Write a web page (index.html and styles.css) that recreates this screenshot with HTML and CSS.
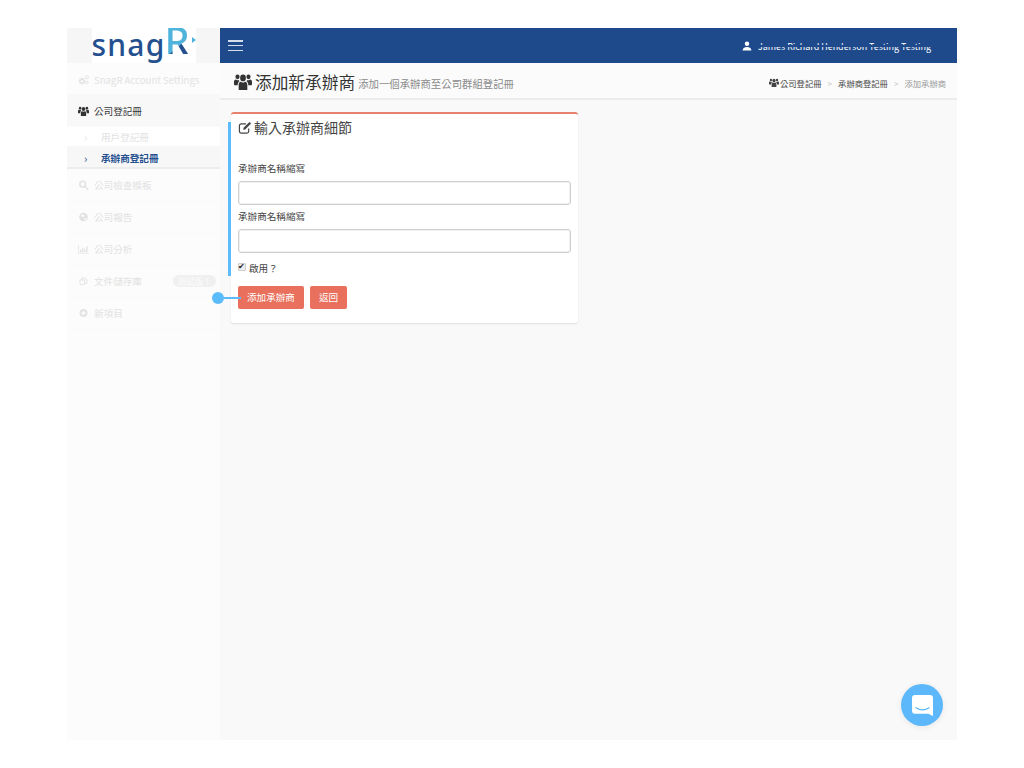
FILE: index.html
```html
<!DOCTYPE html>
<html>
<head>
    <title>添加新承辦商</title>
    <meta charset="UTF-8">
    <meta name="viewport" content="width=device-width, initial-scale=1.0">
    <link rel="stylesheet" href="styles.css">
</head>
<body>
  <svg class="icon-defs" width="0" height="0">
    <defs>
      <symbol id="i-users" viewBox="0 0 20 16" preserveAspectRatio="none">
        <circle cx="10" cy="4.600" r="3.200"/>
        <circle cx="3.900" cy="3.600" r="2.300"/>
        <circle cx="16.100" cy="3.600" r="2.300"/>
        <path d="M5.200 15.500v-4.300c0-2 1.300-3 2.600-3 .7.500 1.400.8 2.200.8s1.500-.3 2.200-.8c1.300 0 2.600 1 2.600 3v4.300c0 .3-.3.5-.6.500H5.800c-.3 0-.6-.2-.6-.5z"/>
        <path d="M0 10.500V8.300c0-1.300.8-2.200 2-2.200.6.500 1.200.7 1.900.7.500 0 .9-.1 1.300-.3.200.5.500.9.900 1.200-1.200.6-2 1.800-2 3.500v.4H.9c-.5 0-.9-.3-.9-.9z"/>
        <path d="M20 10.500V8.300c0-1.300-.8-2.200-2-2.200-.6.500-1.200.7-1.900.7-.5 0-.9-.1-1.300-.3-.2.500-.5.900-.9 1.200 1.200.6 2 1.800 2 3.500v.4h3.200c.5 0 .9-.3.900-.9z"/>
      </symbol>
      <symbol id="i-cogs" viewBox="0 0 16 14">
        <path d="M5.500 3.200l1 .1.400 1.300.9.400 1.200-.6.900.9-.6 1.200.4.900 1.300.4v1.400l-1.300.4-.4.900.6 1.200-.9.900-1.200-.6-.9.400-.4 1.300H5.100l-.4-1.300-.9-.4-1.200.6-.9-.9.6-1.200-.4-.9L.5 9.500V8.100l1.300-.4.400-.9-.6-1.200.9-.9 1.200.6.900-.4.400-1.300zM5.800 7a1.800 1.800 0 1 0 0 3.600 1.800 1.800 0 0 0 0-3.600z" fill-rule="evenodd"/>
        <circle cx="13" cy="3" r="2.200" fill="none" stroke="currentColor" stroke-width="1.400"/>
        <circle cx="13" cy="10.800" r="1.800" fill="none" stroke="currentColor" stroke-width="1.200"/>
      </symbol>
    </defs>
  </svg>

  <div class="app">
    <aside class="sidebar">
      <div class="logo-bar">
        <div class="logo"><span class="logo-snag">snag</span><span class="logo-r">R</span><span class="logo-tip"></span></div>
      </div>
      <nav class="nav">
        <a class="nav-item first faded" href="#">
          <svg class="nav-icon" viewBox="0 0 16 14" fill="currentColor"><use href="#i-cogs"/></svg>
          <span>SnagR Account Settings</span>
        </a>
        <a class="nav-item open" href="#">
          <svg class="nav-icon" viewBox="0 0 20 16" preserveAspectRatio="none" fill="currentColor"><use href="#i-users"/></svg>
          <span>公司登記冊</span>
        </a>
        <div class="subnav">
          <a class="sub-item faded" href="#"><span class="chevron">›</span>用戶登記冊</a>
          <a class="sub-item active" href="#"><span class="chevron">›</span>承辦商登記冊</a>
        </div>
        <a class="nav-item faded" href="#">
          <svg class="nav-icon" viewBox="0 0 14 14" fill="none" stroke="currentColor" stroke-width="2"><circle cx="5.800" cy="5.800" r="4"/><path d="M8.800 8.800l4 4" stroke-linecap="round"/></svg>
          <span>公司檢查模板</span>
        </a>
        <a class="nav-item faded" href="#">
          <svg class="nav-icon" viewBox="0 0 14 14" fill="currentColor"><path d="M7 1a6 6 0 1 0 0 12A6 6 0 0 0 7 1zM5 3.500l2.500.5 1 1.500-1.500 1-2 .5L3.500 5zm3 5l2.500.2-1 2.500-1.500.3z" fill-rule="evenodd"/></svg>
          <span>公司報告</span>
        </a>
        <a class="nav-item faded" href="#">
          <svg class="nav-icon" viewBox="0 0 16 14" fill="currentColor"><path d="M0 1h1v12h15v1H0z"/><path d="M3 8h2v4H3zM6 5h2v7H6zM9 7h2v5H9zM12 3h2v9h-2z"/></svg>
          <span>公司分析</span>
        </a>
        <a class="nav-item faded" href="#">
          <svg class="nav-icon" viewBox="0 0 14 14" fill="none" stroke="currentColor" stroke-width="1.300"><path d="M2 5.500h6.500V12H3.500L2 10.500z"/><path d="M5 5.500V2.500h3.500l3.500 3V10H8.500"/></svg>
          <span>文件儲存庫</span>
          <span class="beta">測試版！</span>
        </a>
        <a class="nav-item faded" href="#">
          <svg class="nav-icon" viewBox="0 0 14 14" fill="currentColor"><path d="M7 1.500a5.500 5.500 0 1 0 0 11 5.500 5.500 0 0 0 0-11zM6 4h2v2h2v2H8v2H6V8H4V6h2z" fill-rule="evenodd"/></svg>
          <span>新項目</span>
        </a>
      </nav>
    </aside>

    <main class="main">
      <header class="top-bar">
        <button class="menu-button" title="Menu"><span></span><span></span><span></span></button>
        <div class="user">
          <svg class="user-icon" viewBox="0 0 12 12" fill="currentColor"><circle cx="6" cy="3.200" r="2.700"/><path d="M.8 11.500c0-2.700 1.800-4.300 5.200-4.300s5.200 1.600 5.200 4.300z"/></svg>
          <span class="user-name">James Richard Henderson Testing Testing</span>
        </div>
      </header>

      <div class="page-head">
        <h1 class="page-title">
          <svg class="title-icon" viewBox="0 0 20 16" preserveAspectRatio="none" fill="currentColor"><use href="#i-users"/></svg>
          添加新承辦商
          <small>添加一個承辦商至公司群組登記冊</small>
        </h1>
        <ol class="breadcrumb">
          <li class="crumb-link">
            <svg class="crumb-icon" viewBox="0 0 20 16" preserveAspectRatio="none" fill="currentColor"><use href="#i-users"/></svg>
            公司登記冊
          </li>
          <li class="crumb-sep">&gt;</li>
          <li class="crumb-link">承辦商登記冊</li>
          <li class="crumb-sep">&gt;</li>
          <li class="crumb-current">添加承辦商</li>
        </ol>
      </div>

      <div class="content">
        <section class="card">
          <h2 class="card-title">
            <svg class="edit-icon" viewBox="0 0 15 14" fill="none" stroke="currentColor" stroke-width="1.300"><path d="M11.500 8v3a2 2 0 0 1-2 2h-6a2 2 0 0 1-2-2V5a2 2 0 0 1 2-2h5"/><path d="M5.500 9.500l.5-2.200L12.300 1l1.800 1.800-6.400 6.300z" fill="currentColor" stroke="none"/></svg>
            輸入承辦商細節
          </h2>
          <form class="form">
            <div class="field">
              <label>承辦商名稱縮寫</label>
              <input type="text">
            </div>
            <div class="field">
              <label>承辦商名稱縮寫</label>
              <input type="text">
            </div>
            <label class="check"><input type="checkbox" checked> 啟用？</label>
            <div class="actions">
              <a class="btn" href="#">添加承辦商</a>
              <a class="btn" href="#">返回</a>
            </div>
          </form>
          <div class="mark-bar"></div>
          <div class="mark-pointer"></div>
        </section>
      </div>

      <button class="chat-button" title="Chat">
        <svg viewBox="0 0 24 24" width="24" height="24"><path d="M3.500 0h17A3.500 3.500 0 0 1 24 3.500V24l-5.500-2.500H3.500A3.500 3.500 0 0 1 0 18V3.500A3.500 3.500 0 0 1 3.500 0z" fill="#fff"/><path d="M4.500 14.500c4.500 3 10.500 3 15 0" fill="none" stroke="#5cb8fb" stroke-width="1.300" stroke-linecap="round"/></svg>
      </button>
    </main>
  </div>
</body>
</html>
```

FILE: styles.css
```css
* {
    box-sizing: border-box;
}

body {
    margin: 0;
    background-color: white;
    color: #333;
    font-family: "Noto Sans CJK TC", "Noto Sans", sans-serif;
    font-size: 9.6px;
}

a {
    color: inherit;
    text-decoration: none;
}

.icon-defs {
    position: absolute;
}

.app {
    display: flex;
    width: 890px;
    height: 712px;
    margin: 28px 67px;
}

/* sidebar */
.sidebar {
    width: 153px;
    flex-shrink: 0;
    background-color: #fcfcfc;
}

.logo-bar {
    display: flex;
    justify-content: center;
    height: 35px;
    background-color: #f6f6f6;
}

.logo {
    position: relative;
    display: flex;
    align-items: baseline;
    width: 104px;
    height: 35px;
    background-color: white;
    font-family: "Noto Sans", sans-serif;
    font-weight: 500;
    line-height: 26px;
    white-space: nowrap;
}

.logo-snag {
    color: #24508f;
    font-size: 30px;
    letter-spacing: 1.200px;
}

.logo-r {
    font-size: 40px;
    margin-left: -1px;
    color: transparent;
    background: linear-gradient(140deg, #4fb3dc 62%, #24508f 66%);
    -webkit-background-clip: text;
    background-clip: text;
}

.logo-tip {
    position: absolute;
    right: 0;
    top: 9px;
    border-left: 4px solid #4fb3dc;
    border-top: 3px solid transparent;
    border-bottom: 3px solid transparent;
}

.nav-item {
    display: flex;
    align-items: center;
    height: 32px;
    padding: 0 4px 0 11px;
    border-bottom: 1px solid #fafafa;
}

.nav-item.first {
    padding-top: 2px;
}

.nav-item.open {
    background-color: #f8f8f8;
    color: #333;
}

.faded {
    color: #e2e2e2;
}

.nav-icon {
    width: 11px;
    height: 10px;
    margin-right: 5px;
    flex-shrink: 0;
}

.beta {
    margin-left: auto;
    width: 43px;
    height: 12px;
    line-height: 12px;
    border-radius: 6px;
    background-color: #f0f0f0;
    color: #fbfbfb;
    font-size: 8.600px;
    text-align: center;
}

.subnav {
    display: flex;
    flex-direction: column;
    border-bottom: 2px solid #ececec;
}

.sub-item {
    display: flex;
    align-items: center;
    height: 19px;
    padding-left: 17px;
    background-color: white;
}

.sub-item.active {
    height: 21px;
    padding-top: 2px;
    background-color: #f7f7f7;
    color: #24508f;
    font-weight: bold;
}

.chevron {
    width: 17px;
    font-size: 11px;
    font-weight: normal;
}

/* main column */
.main {
    position: relative;
    flex: 1;
    display: flex;
    flex-direction: column;
    background-color: #f9f9f9;
}

.top-bar {
    display: flex;
    align-items: center;
    justify-content: space-between;
    height: 35px;
    padding: 0 26px 0 8px;
    background-color: #1e4a8c;
    color: white;
}

.menu-button {
    display: flex;
    flex-direction: column;
    justify-content: space-between;
    width: 15px;
    height: 11px;
    padding: 0;
    border: none;
    background-color: transparent;
}

.menu-button span {
    display: block;
    height: 1.500px;
    background-color: #d5deeb;
}

.user {
    display: flex;
    align-items: center;
    gap: 6px;
}

.user-icon {
    width: 10px;
    height: 10px;
}

.user-name {
    position: relative;
    top: 1px;
    font-size: 8.950px;
    line-height: 11px;
    white-space: nowrap;
}

.user-name::after {
    content: "";
    position: absolute;
    left: 0;
    right: 0;
    top: 4px;
    height: 2px;
    background-color: #1e4a8c;
}

.page-head {
    display: flex;
    align-items: center;
    justify-content: space-between;
    height: 37px;
    padding: 2px 11px 0 14px;
    background-color: #fbfbfb;
    border-bottom: 2px solid #ececec;
}

.page-title {
    display: flex;
    align-items: center;
    margin: 0;
    font-size: 16.700px;
    font-weight: normal;
    color: #333;
}

.page-title small {
    margin-left: 3px;
    padding-top: 3px;
    font-size: 10.400px;
    color: #8a8a8a;
}

.title-icon {
    width: 18px;
    height: 17px;
    margin-right: 3px;
}

.breadcrumb {
    display: flex;
    align-items: center;
    gap: 6px;
    margin: 0;
    padding: 2px 0 0;
    list-style: none;
    font-size: 8.300px;
}

.crumb-link {
    display: flex;
    align-items: center;
    color: #444;
}

.crumb-sep {
    color: #ccc;
}

.crumb-current {
    color: #999;
}

.crumb-icon {
    width: 10px;
    height: 9px;
    margin-right: 1px;
}

.content {
    flex: 1;
    padding: 12px 11px;
}

.card {
    position: relative;
    width: 347px;
    height: 211px;
    padding: 5px 7px;
    background-color: white;
    border-top: 2px solid #e8806e;
    border-radius: 3px;
    box-shadow: 0 1px 2px rgba(0, 0, 0, 0.1);
}

.card-title {
    display: flex;
    align-items: center;
    margin: 0 0 26px;
    font-size: 14px;
    line-height: 17px;
    font-weight: normal;
    color: #444;
}

.edit-icon {
    width: 14px;
    height: 13px;
    margin-right: 2px;
}

.form {
    display: flex;
    flex-direction: column;
}

.field {
    display: flex;
    flex-direction: column;
    height: 48px;
}

.field label {
    height: 19px;
    line-height: 12px;
    color: #444;
}

.field input {
    width: 333px;
    height: 24px;
    border: 1px solid #cfcfcf;
    border-radius: 3px;
    background-color: white;
    box-shadow: inset 0 0 0 1px #f0f0f0;
}

.check {
    display: flex;
    align-items: center;
    gap: 3px;
    height: 20px;
    color: #444;
}

.check input {
    appearance: none;
    position: relative;
    top: -1px;
    width: 8px;
    height: 8px;
    margin: 0;
    border: 1px solid #ccc;
    border-radius: 1px;
    background-color: #eee;
}

.check input::before {
    content: "✔";
    position: absolute;
    left: -1px;
    top: -2px;
    font-size: 8px;
    line-height: 9px;
    color: #222;
}

.actions {
    display: flex;
    gap: 6px;
    margin-top: 8px;
}

.btn {
    display: block;
    height: 23px;
    line-height: 23px;
    padding: 0 9px;
    border-radius: 2px;
    background-color: #e8705c;
    color: white;
}

/* blue marks over the form */
.mark-bar {
    position: absolute;
    left: -3px;
    top: 8px;
    width: 3px;
    height: 154px;
    background-color: #5cbcfb;
}

.mark-pointer {
    position: absolute;
    left: -19px;
    top: 178px;
    width: 30px;
    height: 12px;
}

.mark-pointer::before {
    content: "";
    position: absolute;
    left: 0;
    top: 0;
    width: 12px;
    height: 12px;
    border-radius: 50%;
    background-color: #5cbcfb;
}

.mark-pointer::after {
    content: "";
    position: absolute;
    left: 10px;
    top: 5px;
    width: 19px;
    height: 2px;
    background-color: #5cbcfb;
}

.chat-button {
    position: absolute;
    right: 14px;
    bottom: 14px;
    display: flex;
    align-items: center;
    justify-content: center;
    width: 42px;
    height: 42px;
    padding: 0;
    border: none;
    border-radius: 50%;
    background-color: #5cb8fb;
    box-shadow: 0 1px 6px rgba(0, 0, 0, 0.08);
}

.chat-button svg {
    width: 21px;
    height: 21px;
}
```
